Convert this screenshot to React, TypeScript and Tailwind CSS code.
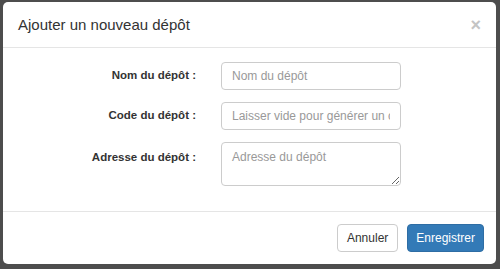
export default function App() {
  const font = { fontFamily: '"Liberation Sans", Arial, sans-serif' }
  return (
    <div className="w-[500px] h-[269px] bg-[#4d4d4d] pt-[2px] pl-[3px]" style={font}>
      <div className="w-[493px] h-[262px] bg-white rounded-[5px] flex flex-col overflow-hidden">
        <div className="h-[46px] border-b border-[#e5e5e5] flex items-center justify-between pl-[15px] pr-[15px]">
          <h4 className="text-[15px] text-[#333] pt-[2px]">Ajouter un nouveau dépôt</h4>
          <span className="text-[18px] font-bold text-[#c4c4c4] leading-none">×</span>
        </div>
        <div className="flex-1 pt-[14px] flex flex-col gap-[12px]">
          <div className="flex items-center">
            <label className="w-[193px] text-right text-[11.5px] font-bold text-[#333]">Nom du dépôt :</label>
            <input
              className="ml-[25px] w-[180px] h-[28px] border border-[#ccc] rounded-[4px] px-[10px] text-[12px] placeholder:text-[#999] outline-none"
              placeholder="Nom du dépôt"
            />
          </div>
          <div className="flex items-center">
            <label className="w-[193px] text-right text-[11.5px] font-bold text-[#333]">Code du dépôt :</label>
            <input
              className="ml-[25px] w-[180px] h-[28px] border border-[#ccc] rounded-[4px] px-[10px] text-[12px] placeholder:text-[#999] outline-none"
              placeholder="Laisser vide pour générer un code"
            />
          </div>
          <div className="flex items-start">
            <label className="w-[193px] text-right text-[11.5px] font-bold text-[#333] pt-[7px]">Adresse du dépôt :</label>
            <textarea
              className="ml-[25px] w-[180px] h-[44px] border border-[#ccc] rounded-[4px] px-[10px] py-[5px] text-[12px] placeholder:text-[#999] outline-none"
              placeholder="Adresse du dépôt"
            />
          </div>
        </div>
        <div className="h-[53px] border-t border-[#e5e5e5] flex items-center justify-end gap-[9px] pr-[12px]">
          <button className="h-[28px] px-[9px] border border-[#ccc] rounded-[4px] text-[12px] text-[#333] bg-white">Annuler</button>
          <button className="h-[28px] px-[8px] border border-[#2e6da4] rounded-[4px] text-[12px] text-white bg-[#337ab7]">Enregistrer</button>
        </div>
      </div>
    </div>
  )
}
